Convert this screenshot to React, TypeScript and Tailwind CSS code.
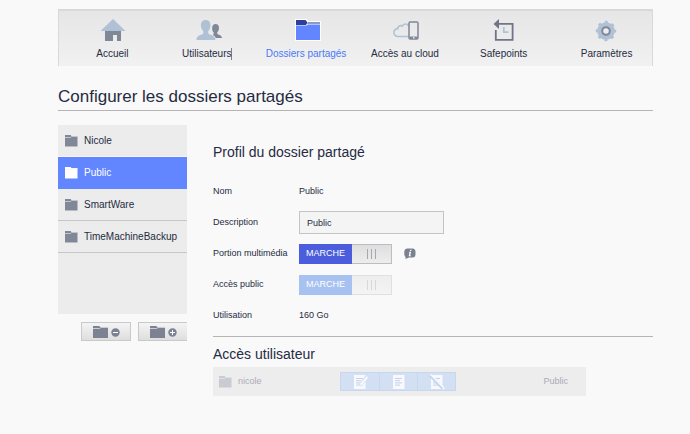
import { useState } from 'react'
import type { ReactNode } from 'react'
import clsx from 'clsx'

function HomeIcon() {
  return (
    <svg width="26" height="24" viewBox="0 0 26 24" aria-hidden="true">
      <path d="M4 11h16v11h-4v-6h-4v6H4z" fill="#808797" />
      <path d="M12 0l12.500 12H-.5z" fill="#b0c1d6" />
    </svg>
  )
}

function UsersIcon() {
  return (
    <svg width="26" height="24" viewBox="0 0 26 24" aria-hidden="true">
      <path
        d="M19.500 5c2.100 0 3.700 1.600 3.500 4.200-.1 1.800-.9 3.200-1.700 4.100v1.500c.7 1 4.400 1.100 4.700 4.200h-6.300c-.4-1.400-1.400-2.300-3-3 .9-.5 1-1.300 1-2.600-1-.9-1.600-2.300-1.600-4C16.100 6.800 17.400 5 19.500 5z"
        fill="#808797"
      />
      <path
        d="M9.700 1c3 0 4.900 2.200 4.800 5.500-.1 2.500-1 4.300-2.200 5.500v2.200c.8 2 7 1.300 7.200 6.800H.4c.2-5.500 6-4.800 6.800-6.800V12C6 10.800 5 9 4.900 6.500 4.800 3.200 6.700 1 9.700 1z"
        fill="#b0c1d6"
      />
    </svg>
  )
}

function SharesIcon() {
  return (
    <svg width="26" height="24" viewBox="0 0 26 24" aria-hidden="true">
      <path d="M0 0h11.500l2 2H26v20H0z" fill="#fff" />
      <path d="M1 1h9.500l2 2.500L11 6H1z" fill="#2c3f9b" />
      <path d="M13 3h12v2H12z" fill="#8d9ac4" />
      <path d="M1 6.500h10.500L13 5.500h12V21H1z" fill="#6286ff" />
    </svg>
  )
}

function CloudIcon() {
  return (
    <svg width="26" height="24" viewBox="0 0 26 24" fill="none" aria-hidden="true">
      <path
        d="M15.500 17.500H5.300c-5.600 0-5.900-7.300-.6-7.900.1-2.600 2.600-3.600 4.500-2.500C10.500 4.200 15 4.500 15.700 7.200"
        stroke="#b0c1d6"
        strokeWidth="1.600"
      />
      <rect x="16" y="3" width="9" height="17" rx="1.200" stroke="#808797" strokeWidth="1.500" />
      <path d="M16.500 17.500h8v2.500h-8z" fill="#808797" />
      <path d="M20 18h1.500v1.500H20z" fill="#eee" />
    </svg>
  )
}

function SafepointsIcon() {
  return (
    <svg width="26" height="24" viewBox="0 0 26 24" aria-hidden="true">
      <path d="M7 4.800h13.600v16H3.800V11" fill="none" stroke="#6f7587" strokeWidth="1.800" />
      <path d="M7 0v10L1.500 5z" fill="#6f7587" />
      <path d="M11.800 8v5.200h4.700" fill="none" stroke="#b0c1d6" strokeWidth="1.800" />
    </svg>
  )
}

function SettingsIcon() {
  return (
    <svg width="26" height="24" viewBox="0 0 26 24" fill="none" aria-hidden="true">
      <circle cx="11" cy="12" r="9" stroke="#b0c1d6" strokeWidth="2.400" strokeDasharray="3 4.069" strokeDashoffset="1.500" />
      <circle cx="11" cy="12" r="8.800" fill="#b0c1d6" />
      <circle cx="11" cy="12" r="3.800" fill="#ececec" stroke="#808797" strokeWidth="2" />
    </svg>
  )
}

function FolderIcon({ className }: { className?: string }) {
  return (
    <svg width="13" height="12" viewBox="0 0 13 12" className={clsx('shrink-0', className)} aria-hidden="true">
      <path d="M0 0h5.500l1 1H12.500v10.500H0z" fill="currentColor" />
      <path d="M0 2.500h5.500l1.200-1h5.800" fill="none" stroke="#eee" strokeWidth=".6" />
    </svg>
  )
}

function FolderActionIcon({ plus }: { plus?: boolean }) {
  return (
    <svg width="27" height="14" viewBox="0 0 27 14" aria-hidden="true">
      <path d="M0 1h6l1.500 1H15v11H0z" fill="#7c8292" />
      <path d="M0 3.500h6.500L8 2.500h7" fill="none" stroke="#dfe1e6" strokeWidth=".8" />
      <circle cx="22.500" cy="7.500" r="4.200" fill="#7c8292" />
      <path d={plus ? 'M20 7.500h5M22.500 5v5' : 'M20 7.500h5'} stroke="#fff" strokeWidth="1" />
    </svg>
  )
}

function SheetIcon({ kind }: { kind: string }) {
  return (
    <svg width="16" height="16" viewBox="0 0 16 16" fill="none" aria-hidden="true">
      <path d="M2 1h11.500v14H2z" fill="#f7f9fc" />
      <path d="M4 4.500h7M4 6.700h5M4 8.900h7M4 11.100h5" stroke="#c3d2ea" />
      {kind === 'write' && (
        <>
          <path d="M8 11.500l7-8.500" stroke="#d3dff2" strokeWidth="3.600" />
          <path d="M8.500 11l7-8" stroke="#f7f9fc" strokeWidth="2" />
        </>
      )}
      {kind === 'none' && (
        <>
          <path d="M1 1l14 14" stroke="#f7f9fc" strokeWidth="3" />
          <path d="M.5 1.500L13.500 15" stroke="#c3d3ed" strokeWidth="1.800" />
        </>
      )}
    </svg>
  )
}

const navItems = [
  { label: 'Accueil', icon: <HomeIcon />, className: 'pl-2' },
  { label: 'Utilisateurs', icon: <UsersIcon />, cursor: true },
  { label: 'Dossiers partagés', icon: <SharesIcon />, active: true },
  { label: 'Accès au cloud', icon: <CloudIcon /> },
  { label: 'Safepoints', icon: <SafepointsIcon /> },
  { label: 'Paramètres', icon: <SettingsIcon />, className: 'pl-2' },
]

const folders = ['Nicole', 'Public', 'SmartWare', 'TimeMachineBackup']

const accessLevels = [
  { kind: 'write', label: 'Lecture et écriture' },
  { kind: 'read', label: 'Lecture seule' },
  { kind: 'none', label: 'Aucun accès' },
]

function Toggle({ id, disabled }: { id: string; disabled?: boolean }) {
  const [on, setOn] = useState(true)

  return (
    <label className={clsx('relative flex h-5 w-[93px] text-[9px]', !disabled && 'cursor-pointer')}>
      <input
        id={id}
        type="checkbox"
        className="sr-only"
        checked={on}
        disabled={disabled}
        onChange={() => setOn(!on)}
      />
      <span
        className={clsx(
          'flex flex-1 items-center justify-center text-white',
          disabled ? 'bg-[#a7c2f1]' : 'bg-[#4b5ddd]',
          !on && 'order-2'
        )}
      >
        {on ? 'MARCHE' : 'ARRÊT'}
      </span>
      <span
        className={clsx(
          'flex w-10 items-center justify-center gap-[3px] border border-l-0 border-[#bdbdbd] bg-linear-to-b from-[#dedede] to-[#ededed]',
          disabled && 'opacity-40'
        )}
      >
        <span className="h-2.5 w-px bg-[#a4a8b2]" />
        <span className="h-2.5 w-px bg-[#a4a8b2]" />
        <span className="h-2.5 w-px bg-[#a4a8b2]" />
      </span>
    </label>
  )
}

function Field({ label, htmlFor, children }: { label: string; htmlFor?: string; children: ReactNode }) {
  return (
    <div className="flex h-[31px] items-center text-[9px]">
      {htmlFor ? (
        <label htmlFor={htmlFor} className="w-[86px] shrink-0">{label}</label>
      ) : (
        <span className="w-[86px] shrink-0">{label}</span>
      )}
      {children}
    </div>
  )
}

export default function App() {
  const [selected, setSelected] = useState('Public')
  const [description, setDescription] = useState('Public')

  return (
    <div className="min-h-screen bg-[#f9f9f9] pt-[9px] pr-[37px] pb-9 pl-[58px] font-['Liberation_Sans',Arial,sans-serif] text-[#252b42]">
      {/* Main navigation */}
      <nav className="grid h-[57px] grid-cols-6 border-x border-t-2 border-[#d9d9d9] bg-linear-to-b from-[#e6e6e6] to-[#f1f1f1]">
        {navItems.map((item) => (
          <a
            key={item.label}
            href="#"
            className={clsx(
              'flex flex-col items-center pt-2 text-[10px] leading-3 whitespace-nowrap',
              item.active && 'text-[#4a79f7]',
              item.className
            )}
          >
            <span className="pl-[3px]">{item.icon}</span>
            <span className={clsx('mt-[5px]', item.cursor && 'border-r border-[#7b8090]')}>{item.label}</span>
          </a>
        ))}
      </nav>

      <h1 className="mt-[21px] border-b border-[#b5b5b5] pb-[3px] text-[17px] leading-5">
        Configurer les dossiers partagés
      </h1>

      <div className="mt-3.5 flex gap-[26px]">
        {/* Folder list */}
        <aside className="w-[129px] shrink-0">
          <ul className="min-h-[189px] bg-[#ececec]">
            {folders.map((name, i) => (
              <li key={name}>
                <button
                  onClick={() => setSelected(name)}
                  className={clsx(
                    'flex h-8 w-full items-center gap-1.5 border-b pl-[7px] text-[10px]',
                    name === selected && 'border-[#6286ff] bg-[#6286ff] text-white',
                    name !== selected && (folders[i + 1] === selected ? 'border-[#f6f6f6]' : 'border-[#c6c6c6]')
                  )}
                >
                  <FolderIcon className={name === selected ? 'text-white' : 'text-[#808797]'} />
                  {name}
                </button>
              </li>
            ))}
          </ul>
          <div className="mt-2 flex justify-end gap-[7px]">
            <button
              aria-label="Supprimer le dossier"
              className="flex h-[19px] w-[50px] items-center justify-center border border-[#c9c9c9] bg-linear-to-b from-[#f4f4f4] to-[#dedede]"
            >
              <FolderActionIcon />
            </button>
            <button
              aria-label="Ajouter un dossier"
              className="flex h-[19px] w-[49px] items-center justify-center border border-r-0 border-[#c9c9c9] bg-linear-to-b from-[#f4f4f4] to-[#dedede]"
            >
              <FolderActionIcon plus />
            </button>
          </div>
        </aside>

        <main className="min-w-0 flex-1 pt-[18px]">
          {/* Share profile */}
          <section className="border-b border-[#b5b5b5] pb-[5px]">
            <h2 className="mb-[15px] text-[14px] leading-[18px]">Profil du dossier partagé</h2>
            <Field label="Nom">{selected}</Field>
            <Field label="Description" htmlFor="description">
              <input
                id="description"
                type="text"
                value={description}
                onChange={(e) => setDescription(e.target.value)}
                className="h-[23px] w-[145px] border border-[#c4c4c4] bg-[#f4f4f4] px-[7px] outline-none"
              />
            </Field>
            <Field label="Portion multimédia" htmlFor="media">
              <Toggle id="media" />
              <button aria-label="Informations" className="ml-3">
                <svg width="12" height="12" viewBox="0 0 12 12" aria-hidden="true">
                  <path d="M3.500 .5h5Q11.500 .5 11.500 4v2Q11.500 9.500 8.500 9.500H5L1.500 11V9Q.3 8 .3 6V4Q.3 .5 3.500 .5z" fill="#7b8190" />
                  <path d="M6.200 1.700h1.300l-.3 1.200H5.900zM5.200 3.700h1.900l-.9 3.700h.8v.8H4.700l.8-3.700h-.6z" fill="#fff" />
                </svg>
              </button>
            </Field>
            <Field label="Accès public" htmlFor="public-access">
              <Toggle id="public-access" disabled />
            </Field>
            <Field label="Utilisation">160 Go</Field>
          </section>

          {/* User access */}
          <section className="pt-2">
            <h2 className="text-[14px] leading-[18px]">Accès utilisateur</h2>
            <div className="mt-1 mr-[67px] flex h-[29px] items-center bg-[#ededed] pr-[18px] pl-1.5 text-[9px] text-[#a9acb5]">
              <FolderIcon className="text-[#c8cbd1]" />
              <span className="ml-1.5 w-[102px]">nicole</span>
              <div className="flex border border-[#c9d7ee] bg-[#d3dff2]">
                {accessLevels.map((level, i) => (
                  <button
                    key={level.kind}
                    disabled
                    aria-label={level.label}
                    className={clsx(
                      'flex h-[17px] w-[38px] items-center justify-center',
                      i > 0 && 'border-l border-[#c9d7ee]'
                    )}
                  >
                    <SheetIcon kind={level.kind} />
                  </button>
                ))}
              </div>
              <span className="ml-auto">Public</span>
            </div>
          </section>
        </main>
      </div>
    </div>
  )
}
